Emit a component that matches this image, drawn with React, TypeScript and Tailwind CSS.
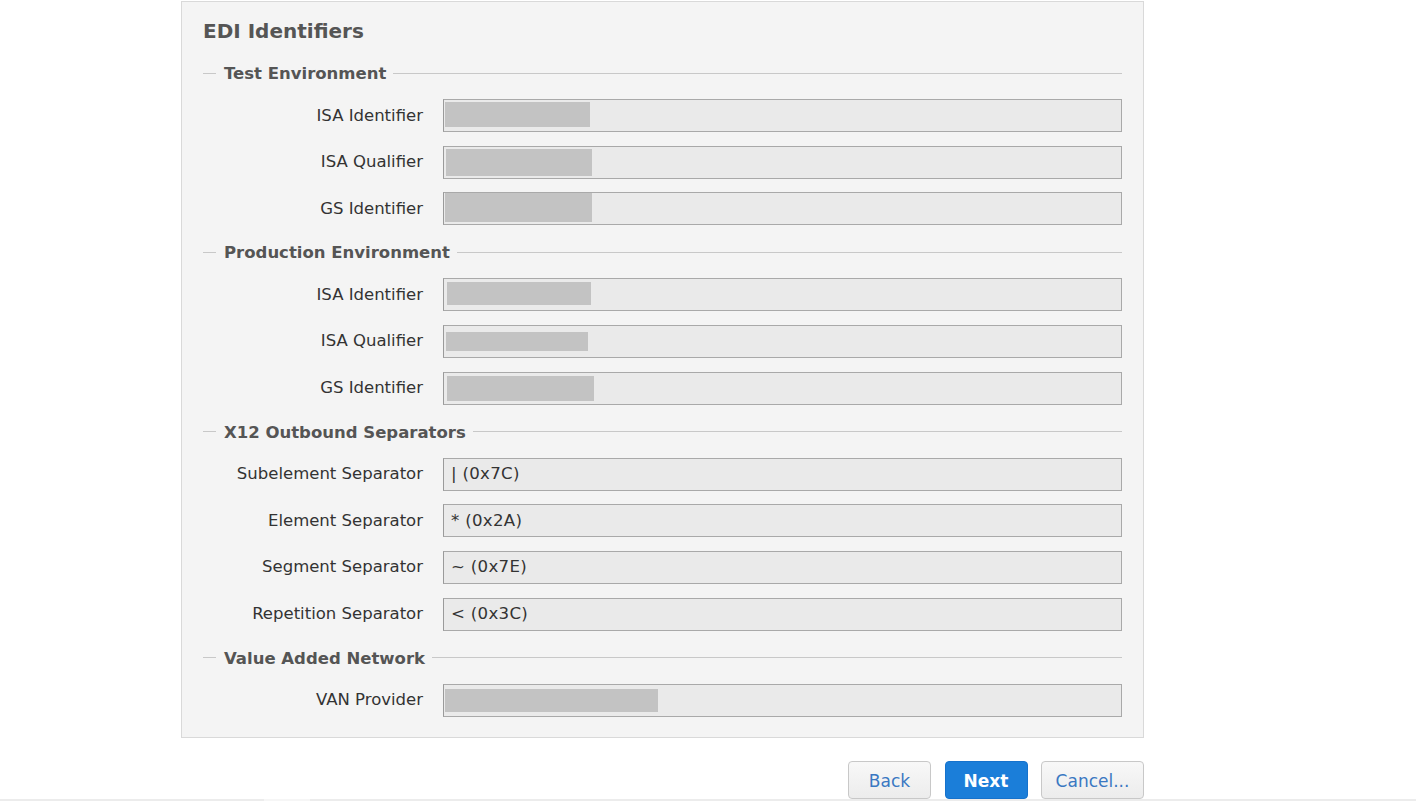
import React from "react";

type Block = { l: number; t: number; w: number; h: number };
type Row = { label: string; value?: string; block?: Block };
type Section = { title: string; rows: Row[] };

const sections: Section[] = [
  {
    title: "Test Environment",
    rows: [
      { label: "ISA Identifier", block: { l: 2, t: 3, w: 145, h: 25 } },
      { label: "ISA Qualifier", block: { l: 3, t: 3, w: 146, h: 27 } },
      { label: "GS Identifier", block: { l: 2, t: 1, w: 147, h: 29 } },
    ],
  },
  {
    title: "Production Environment",
    rows: [
      { label: "ISA Identifier", block: { l: 4, t: 4, w: 144, h: 23 } },
      { label: "ISA Qualifier", block: { l: 3, t: 7, w: 142, h: 19 } },
      { label: "GS Identifier", block: { l: 4, t: 4, w: 147, h: 25 } },
    ],
  },
  {
    title: "X12 Outbound Separators",
    rows: [
      { label: "Subelement Separator", value: "| (0x7C)" },
      { label: "Element Separator", value: "* (0x2A)" },
      { label: "Segment Separator", value: "~ (0x7E)" },
      { label: "Repetition Separator", value: "< (0x3C)" },
    ],
  },
  {
    title: "Value Added Network",
    rows: [{ label: "VAN Provider", block: { l: 2, t: 5, w: 213, h: 23 } }],
  },
];

function Field({ row }: { row: Row }) {
  return (
    <div className="flex items-center h-[33px]">
      <div className="w-[220px] shrink-0 text-right text-[16.5px] text-[#333333] leading-[20px]">
        {row.label}
      </div>
      <div className="ml-[20px] flex-1 h-[33px] border border-[#a9a9a9] border-l-[#9a9a9a] bg-[#eaeaea] flex items-start">
        {row.block ? (
          <div
            className="bg-[#c3c3c3]"
            style={{
              marginLeft: row.block.l - 1,
              marginTop: row.block.t - 1,
              width: row.block.w,
              height: row.block.h,
            }}
          />
        ) : (
          <div className="pl-[7px] h-full flex items-center text-[16.6px] text-[#333333] leading-[20px] tracking-[0.3px]">
            {row.value}
          </div>
        )}
      </div>
    </div>
  );
}

function SectionBlock({ section }: { section: Section }) {
  return (
    <div>
      <div className="flex items-center h-[20px]">
        <div className="w-[13px] h-px bg-[#c8c8c8]" />
        <div className="ml-[8px] mr-[7px] mt-[2px] text-[16.5px] font-bold text-[#555555] leading-[20px] whitespace-nowrap">
          {section.title}
        </div>
        <div className="flex-1 h-px bg-[#c8c8c8]" />
      </div>
      <div className="mt-[16px] flex flex-col gap-[13.67px]">
        {section.rows.map((r, i) => (
          <Field key={i} row={r} />
        ))}
      </div>
    </div>
  );
}

export default function App() {
  return (
    <div className="relative min-h-[801px] bg-white font-['DejaVu_Sans',sans-serif] overflow-hidden">
      <div className="pt-px">
        <div className="ml-[181px] w-[963px] border border-[#d9d9d9] bg-[#f4f4f4] px-[21px] pt-[17px] pb-[20px]">
          <div className="h-[24px] leading-[24px] text-[20px] font-bold text-[#555555]">
            EDI Identifiers
          </div>
          <div className="mt-[20px] flex flex-col gap-[17px]">
            {sections.map((s, i) => (
              <SectionBlock key={i} section={s} />
            ))}
          </div>
        </div>
        <div className="ml-[181px] w-[963px] mt-[23px] flex justify-end gap-[13.5px]">
          <button className="w-[83px] h-[38px] pt-[4px] rounded-[4px] border border-[#c8c8c8] bg-gradient-to-b from-[#f8f8f8] to-[#ececec] text-[17px] text-[#3a78c2]">
            Back
          </button>
          <button className="w-[83px] h-[38px] pt-[4px] rounded-[4px] border border-[#1672cc] bg-[#1b7ed9] text-[17px] font-bold text-white">
            Next
          </button>
          <button className="w-[103px] h-[38px] pt-[4px] rounded-[4px] border border-[#c8c8c8] bg-gradient-to-b from-[#f8f8f8] to-[#ececec] text-[17px] text-[#3a78c2]">
            Cancel...
          </button>
        </div>
      </div>
      <div className="absolute left-0 right-0 bottom-0 h-[2px] bg-[#ececec]">
        <div className="ml-[264px] w-[46px] h-full bg-[#f6f6f6]" />
      </div>
    </div>
  );
}
